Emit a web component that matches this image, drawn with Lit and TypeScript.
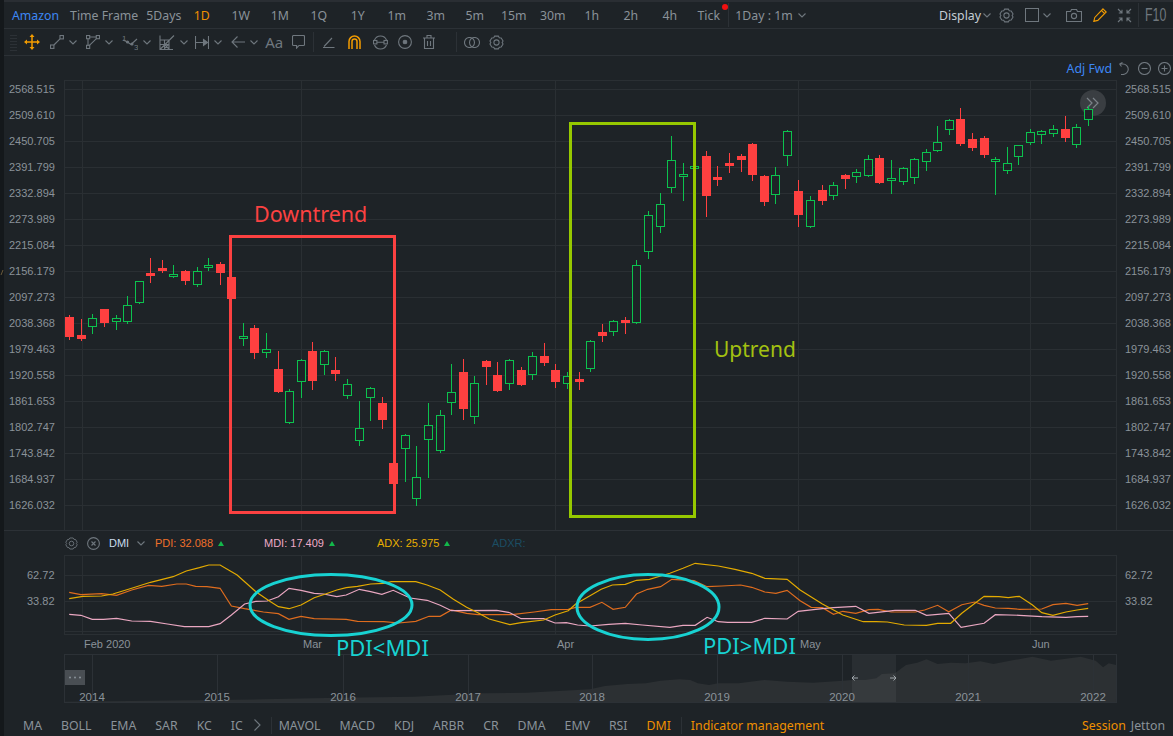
import { LitElement, html, css, svg } from "lit";
import { customElement } from "lit/decorators.js";

// every candle is [x, wickTop, wickBottom, bodyTop, bodyBottom], read from 3x crops
type Candle = [number, number, number, number, number, "r" | "g"];

const GROUP_A: Candle[] = [
  [208, 255, 330, 261, 321, "r"], [244, 267, 332, 315, 327, "r"], [277, 252, 312, 265, 292, "g"],
  [313, 237, 291, 237, 279, "r"], [349, 255, 300, 265, 277, "g"], [382, 198, 282, 226, 275, "g"],
  [418, 152, 221, 154, 218, "g"], [451, 84, 159, 129, 137, "r"], [487, 90, 129, 114, 123, "r"],
  [520, 105, 144, 133, 140, "g"], [556, 120, 165, 124, 153, "r"], [592, 111, 171, 124, 166, "g"],
  [625, 84, 123, 106, 113, "g"], [661, 96, 165, 102, 129, "r"], [694, 141, 207, 141, 207, "r"],
  [730, 279, 348, 319, 328, "g"], [763, 285, 387, 294, 369, "r"], [799, 309, 384, 358, 370, "g"],
  [835, 363, 489, 417, 486, "r"], [868, 477, 582, 484, 578, "g"], [904, 387, 504, 391, 455, "g"],
  [937, 336, 480, 363, 453, "r"], [973, 360, 435, 364, 404, "g"], [1006, 381, 453, 420, 432, "r"],
  [1042, 447, 507, 463, 497, "g"], [1078, 513, 648, 595, 632, "g"], [1111, 471, 573, 475, 503, "g"],
  [1147, 501, 597, 519, 570, "r"], [1180, 699, 762, 699, 762, "r"],
];

const GROUP_B: Candle[] = [
  [16, 942, 1085, 946, 986, "g"], [49, 978, 1158, 1072, 1136, "g"], [85, 849, 1074, 916, 959, "g"],
  [121, 870, 998, 886, 992, "g"], [154, 732, 885, 817, 848, "g"], [190, 717, 900, 756, 867, "r"],
  [223, 768, 912, 790, 890, "g"], [259, 720, 795, 723, 741, "r"], [292, 726, 816, 765, 813, "r"],
  [328, 717, 810, 721, 791, "g"], [364, 741, 798, 750, 795, "r"], [397, 696, 780, 709, 764, "g"],
  [433, 669, 738, 708, 729, "r"], [466, 732, 804, 750, 786, "r"], [502, 756, 807, 769, 791, "g"],
  [538, 756, 810, 777, 786, "r"], [571, 660, 756, 664, 746, "g"], [607, 612, 666, 636, 648, "r"],
  [640, 600, 648, 604, 635, "g"], [676, 591, 642, 600, 609, "r"], [709, 420, 612, 436, 608, "g"],
  [745, 273, 417, 286, 395, "g"], [781, 219, 339, 253, 320, "g"], [814, 48, 219, 121, 203, "g"],
  [850, 129, 243, 163, 170, "g"], [883, 139, 146, 139, 146, "g"],
];

const GROUP_C: Candle[] = [
  [49, 153, 351, 168, 288, "r"], [82, 198, 258, 231, 240, "r"], [118, 159, 219, 189, 198, "r"],
  [154, 162, 216, 168, 180, "r"], [187, 129, 243, 132, 225, "r"], [223, 225, 318, 228, 306, "r"],
  [256, 201, 312, 226, 284, "g"], [292, 90, 198, 94, 167, "g"], [325, 240, 381, 273, 345, "r"],
  [361, 288, 383, 301, 382, "g"], [397, 255, 316, 270, 303, "r"], [430, 246, 300, 256, 287, "g"],
  [466, 222, 267, 225, 237, "r"], [499, 207, 249, 217, 230, "g"], [535, 165, 232, 178, 227, "g"],
  [568, 165, 252, 174, 249, "r"], [604, 180, 282, 235, 242, "g"], [640, 201, 255, 205, 245, "g"],
  [673, 174, 252, 178, 233, "g"], [709, 147, 213, 157, 185, "g"], [742, 78, 156, 127, 152, "g"],
  [778, 57, 105, 61, 89, "g"], [811, 24, 138, 57, 132, "r"], [847, 99, 153, 117, 144, "r"],
  [883, 108, 174, 114, 165, "r"], [916, 171, 285, 178, 185, "g"], [952, 141, 222, 190, 212, "g"],
  [985, 135, 195, 136, 170, "g"], [1021, 87, 135, 97, 128, "g"], [1054, 90, 132, 94, 104, "g"],
  [1090, 75, 111, 88, 101, "g"], [1126, 48, 126, 87, 114, "r"], [1159, 72, 144, 82, 134, "g"],
  [1195, 18, 78, 28, 59, "g"],
];

const place = (list: Candle[], ox: number, oy: number): Candle[] =>
  list.map(([x, a, b, c, d, k]) => [
    Math.floor(ox + x / 3), oy + a / 3, oy + b / 3, oy + c / 3, oy + d / 3, k,
  ]);

const CANDLES = [
  ...place(GROUP_A, 0, 230),
  ...place(GROUP_B, 400, 120),
  ...place(GROUP_C, 690, 100),
];

const PRICES = [
  "2568.515", "2509.610", "2450.705", "2391.799", "2332.894", "2273.989", "2215.084", "2156.179",
  "2097.273", "2038.368", "1979.463", "1920.558", "1861.653", "1802.747", "1743.842", "1684.937", "1626.032",
];

// indicator lines, left half and right half come from two crops with different x scale
const L = 1568 / 590;
const R = 1568 / 583;
const line = (left: number[], right: number[]) => {
  const out: string[] = [];
  for (let i = 0; i < left.length; i += 2) out.push(`${(left[i] / L).toFixed(1)},${(530 + left[i + 1] / 3).toFixed(1)}`);
  for (let i = 0; i < right.length; i += 2) out.push(`${(590 + right[i] / R).toFixed(1)},${(530 + right[i + 1] / 3).toFixed(1)}`);
  return out.join(" ");
};

const ADX = line(
  [184, 206, 220, 199, 270, 198, 300, 192, 350, 175, 400, 157, 460, 140, 495, 123, 530, 113, 555, 105, 585, 105, 630, 135, 680, 185, 715, 212, 740, 230, 768, 236, 800, 225, 835, 203, 865, 192, 895, 180, 920, 173, 950, 169, 985, 162, 1020, 160, 1040, 155, 1105, 155, 1135, 165, 1170, 180, 1205, 208, 1240, 232, 1270, 248, 1300, 267, 1355, 284, 1385, 278, 1445, 270, 1475, 255, 1510, 242, 1530, 222],
  [0, 197, 30, 178, 60, 165, 95, 163, 125, 151, 160, 148, 190, 138, 215, 130, 250, 115, 283, 100, 345, 108, 390, 118, 435, 130, 470, 145, 530, 148, 565, 180, 625, 222, 680, 255, 735, 275, 770, 275, 800, 276, 845, 285, 905, 286, 935, 280, 970, 280, 1000, 250, 1060, 199, 1100, 200, 1125, 203, 1155, 199, 1190, 225, 1215, 248, 1245, 256, 1280, 246, 1310, 240, 1340, 235],
);
const PDI = line(
  [184, 187, 215, 194, 270, 191, 310, 196, 350, 180, 395, 166, 430, 169, 470, 162, 495, 162, 520, 169, 550, 170, 585, 175, 615, 228, 650, 236, 700, 246, 740, 251, 768, 268, 800, 259, 835, 266, 920, 268, 950, 274, 1020, 275, 1060, 279, 1105, 274, 1140, 259, 1170, 259, 1200, 240, 1240, 250, 1270, 254, 1360, 254, 1420, 246, 1465, 239, 1510, 238, 1530, 232],
  [0, 232, 32, 217, 62, 238, 95, 232, 125, 192, 155, 178, 190, 170, 220, 148, 280, 152, 315, 170, 355, 168, 405, 165, 435, 172, 470, 186, 500, 190, 530, 181, 565, 212, 595, 232, 625, 233, 655, 253, 680, 244, 715, 250, 750, 239, 775, 238, 810, 246, 875, 246, 900, 240, 935, 226, 965, 245, 1000, 224, 1035, 216, 1060, 226, 1090, 234, 1125, 235, 1155, 238, 1215, 237, 1245, 224, 1280, 220, 1310, 226, 1340, 221],
);
const MDI = line(
  [184, 253, 215, 256, 245, 268, 275, 268, 310, 265, 350, 273, 400, 274, 445, 282, 490, 290, 555, 290, 585, 281, 615, 255, 650, 222, 680, 214, 710, 213, 740, 200, 768, 175, 800, 181, 835, 190, 860, 192, 895, 200, 920, 195, 955, 178, 985, 185, 1015, 193, 1045, 181, 1090, 204, 1135, 211, 1170, 226, 1200, 242, 1320, 241, 1355, 248, 1385, 266, 1445, 266, 1475, 279, 1505, 278, 1535, 285],
  [0, 288, 50, 283, 95, 280, 140, 285, 215, 292, 250, 286, 283, 286, 315, 262, 345, 275, 370, 277, 435, 277, 470, 265, 530, 267, 560, 244, 625, 236, 655, 233, 715, 229, 750, 250, 820, 241, 875, 241, 905, 256, 965, 250, 998, 292, 1060, 280, 1090, 254, 1155, 256, 1215, 260, 1280, 262, 1310, 260, 1340, 259],
);
const AREA = line(
  [172, 515, 400, 512, 700, 508, 900, 503, 1100, 500, 1280, 490, 1400, 488],
  [0, 478, 40, 468, 100, 462, 150, 460, 190, 452, 240, 448, 270, 450, 290, 460, 320, 465, 345, 460, 400, 460, 470, 450, 530, 455, 600, 458, 680, 452, 705, 450, 740, 450, 770, 445, 785, 432, 820, 430, 850, 405, 880, 398, 905, 388, 935, 402, 970, 398, 1010, 400, 1050, 394, 1085, 402, 1130, 392, 1190, 380, 1240, 392, 1270, 388, 1320, 380, 1360, 392, 1380, 412, 1395, 400, 1415, 405],
);

const VERTICALS = [82, 301, 555, 798, 1030];
const NAV_LINES = [92.5, 217.5, 343.5, 468.5, 592.5, 717.5, 842.5, 968.5, 1093.5];
const NAV_YEARS: [string, number][] = [
  ["2014", 92], ["2015", 217], ["2016", 343], ["2017", 468], ["2018", 592],
  ["2019", 717], ["2020", 842], ["2021", 968], ["2022", 1093],
];
const MONTHS: [string, number][] = [["Feb 2020", 84], ["Mar", 303], ["Apr", 557], ["May", 800], ["Jun", 1032]];

const FRAMES = ["1D", "1W", "1M", "1Q", "1Y", "1m", "3m", "5m", "15m", "30m", "1h", "2h", "4h", "Tick"];
const LEFT_TABS = ["MA", "BOLL", "EMA", "SAR", "KC", "IC"];
const RIGHT_TABS = ["MAVOL", "MACD", "KDJ", "ARBR", "CR", "DMA", "EMV", "RSI"];

const gear = (s = 15) => html`<svg class="ico" width=${s} height=${s} viewBox="0 0 16 16">
  <path d="M6 1.200h4l1 1.700 2 .2 2 3.400-1 1.500 1 1.500-2 3.400-2 .2-1 1.700H6l-1-1.700-2-.2-2-3.400 1-1.500-1-1.500 2-3.400 2-.2z" />
  <circle cx="8" cy="8" r="2.800" />
</svg>`;
const chev = html`<svg class="ico chev" width="8" height="5" viewBox="0 0 8 5"><path d="M.5.5L4 4 7.5.5" /></svg>`;

@customElement("app-root")
export class AppRoot extends LitElement {
  static styles = css`
    :host {
      display: block;
      position: relative;
      width: 1173px;
      height: 736px;
      box-sizing: border-box;
      padding-left: 4px;
      overflow: hidden;
      background: linear-gradient(90deg, #14181b 4px, #1e2327 4px);
      font-family: "Noto Sans", "Liberation Sans", sans-serif;
      color: #8a9299;
      font-size: 12.3px;
    }
    svg { display: block; }
    .ico { fill: none; stroke: #6f777e; stroke-width: 1.1; flex: none; }
    .ico.orange { stroke: #f39c00; }
    .ico.orange-fill { stroke: #f39c00; stroke-width: 1.5; }
    .ico text { fill: #6f777e; stroke: none; font: 8px "Liberation Sans", sans-serif; }

    .bar {
      display: flex;
      align-items: center;
      box-sizing: border-box;
      border-bottom: 1px solid #2c3136;
    }
    .top {
      height: 29px;
      border-top: 2px solid #2a2e33;
      padding-left: 8px;
      padding-right: 8px;
    }
    .name { color: #3d87f5; margin-right: 11px; }
    .label { margin-right: 8px; }
    .five { width: 36px; flex: none; }
    .tf { width: 39px; text-align: center; position: relative; flex: none; }
    .tf.on { color: #f09000; }
    .tf.tick::after {
      content: "";
      position: absolute;
      top: -3px;
      right: 0;
      width: 6px;
      height: 6px;
      border-radius: 50%;
      background: #f01010;
    }
    .vsep { width: 1px; height: 24px; background: #2c3136; flex: none; }
    .span { margin: 0 5px 0 6px; }
    .push { margin-left: auto; }
    .display { color: #c5cdd4; margin-right: 2px; }
    .m8 { margin-left: 8px; }
    .m9 { margin-left: 9px; }
    .m11 { margin-left: 11px; }
    .m4 { margin-left: 4px; }
    .m15 { margin-left: 15px; }
    .m10 { margin-left: 10px; }
    .m6 { margin-left: 6px; }
    .f10 {
      width: 20px;
      flex: none;
      font: 19px "Liberation Sans", sans-serif;
      margin-left: 6px;
      color: #6f777e;
      transform: scaleX(0.65);
      transform-origin: left center;
    }
    .square { width: 14px; height: 14px; border: 1px solid #6f777e; box-sizing: border-box; flex: none; }

    .tools { height: 27px; padding-left: 6px; }
    .grip { margin-right: 7px; stroke: #2c3136; }
    .move { margin-right: 10px; }
    .drop { width: 36.2px; display: flex; align-items: center; gap: 5px; flex: none; }
    .tool { width: 25px; display: flex; align-items: center; flex: none; }
    .aa { width: 27px; margin-left: -2px; font-size: 15px; color: #6f777e; flex: none; line-height: 1; }
    .tools .vsep { height: 20px; margin: 0 9px 0 8px; }
    .tools .after { margin-right: 7px; }

    .adj {
      height: 24px;
      display: flex;
      align-items: center;
      justify-content: flex-end;
      padding-right: 2px;
      gap: 7px;
    }
    .fwd { color: #3d87f5; }

    .axis { font: 11px "Liberation Sans", sans-serif; fill: #8a9299; }
    .year { font: 11.5px "Liberation Sans", sans-serif; fill: #8a9299; }

    .head {
      height: 25px;
      box-sizing: border-box;
      border-top: 1px solid #2c3136;
      display: flex;
      align-items: center;
      padding-left: 61px;
      font: 11px "Liberation Sans", sans-serif;
    }
    .head .dmi { color: #c9dcec; margin-left: 9px; width: 28px; }
    .head .cell { display: flex; align-items: center; gap: 5px; flex: none; }
    .pdi { color: #f0702a; margin-left: 10px; width: 109px; }
    .mdi { color: #eeaac6; width: 113px; }
    .adx { color: #e8ae00; width: 115px; }
    .adxr { color: #1b4d63; }
    .up {
      width: 0;
      height: 0;
      border-left: 3px solid transparent;
      border-right: 3px solid transparent;
      border-bottom: 5px solid #12b84a;
    }

    .tabs {
      height: 33px;
      padding-top: 11px;
      padding-left: 19px;
      padding-right: 8px;
      box-sizing: border-box;
      display: flex;
      align-items: center;
      gap: 19px;
      white-space: nowrap;
    }
    .tabs .more { margin-left: -8px; }
    .tabs .vsep { height: 17px; margin: 0 -10px 0 -9px; }
    .tabs .vsep.first { margin-right: -12px; }
    .tabs .on { color: #f09000; }
    .tabs .jet { margin-left: -14px; }
    .tabs .push { margin-left: auto; }

    .overlay { position: absolute; left: 0; top: 0; pointer-events: none; }
    .note { font-family: "Noto Sans", sans-serif; }
  `;

  private renderCandles() {
    return CANDLES.map(([x, wt, wb, bt, bb, k]) => {
      const red = k === "r";
      const c = red ? "#ff4040" : "#0cc24e";
      const top = Math.round(bt);
      const h = Math.max(Math.round(bb) - top, 2);
      return svg`
        <line x1=${x + 0.5} x2=${x + 0.5} y1=${Math.round(wt)} y2=${Math.round(wb)} stroke=${c} />
        ${red
          ? svg`<rect x=${x - 4} y=${top} width="9" height=${h} fill=${c} />`
          : svg`<rect x=${x - 3.5} y=${top + 0.5} width="8" height=${h - 1} fill="#1e2327" stroke=${c} />`}
      `;
    });
  }

  private renderMain() {
    return html`<svg width="1169" height="450" viewBox="4 80 1169 450">
      <g stroke="#2a2f33" shape-rendering="crispEdges">
        <line x1="64" x2="1116" y1="80.5" y2="80.5" />
        <line x1="64.5" x2="64.5" y1="80" y2="530" />
        <line x1="1116.5" x2="1116.5" y1="80" y2="530" />
        ${PRICES.map((_, i) => svg`<line x1="64" x2="1116" y1=${89.5 + i * 26} y2=${89.5 + i * 26} />`)}
        ${VERTICALS.map((x) => svg`<line x1=${x + 0.5} x2=${x + 0.5} y1="80" y2="530" />`)}
      </g>
      ${PRICES.map((p, i) => svg`
        <text class="axis" x="9" y=${93 + i * 26}>${p}</text>
        <text class="axis" x="1125" y=${93 + i * 26}>${p}</text>
      `)}
      <circle cx="1093" cy="103" r="13" fill="#3a3e42" />
      <path d="M1087 98l5 5-5 5M1093 98l5 5-5 5" fill="none" stroke="#7c8389" stroke-width="1.2" />
      <g shape-rendering="crispEdges">${this.renderCandles()}</g>
    </svg>`;
  }

  private renderHead() {
    return html`<div class="head">
      ${gear(13)}
      <svg class="ico m9" width="13" height="13" viewBox="0 0 13 13">
        <circle cx="6.5" cy="6.5" r="5.9" /><path d="M4.5 4.5l4 4M8.5 4.5l-4 4" />
      </svg>
      <span class="dmi">DMI</span>
      ${chev}
      <span class="cell pdi">PDI: 32.088 <i class="up"></i></span>
      <span class="cell mdi">MDI: 17.409 <i class="up"></i></span>
      <span class="cell adx">ADX: 25.975 <i class="up"></i></span>
      <span class="adxr">ADXR:</span>
    </div>`;
  }

  private renderIndicator() {
    return html`<svg width="1169" height="99" viewBox="4 555 1169 99">
      <g stroke="#2a2f33" shape-rendering="crispEdges">
        <rect x="64.5" y="555.5" width="1052" height="79" fill="none" />
        <line x1="64" x2="1116" y1="575.5" y2="575.5" />
        <line x1="64" x2="1116" y1="601.5" y2="601.5" />
        <line x1="64" x2="1116" y1="631.5" y2="631.5" />
        ${VERTICALS.map((x) => svg`<line x1=${x + 0.5} x2=${x + 0.5} y1="555" y2="634" />`)}
      </g>
      <g fill="none" stroke-width="1.2">
        <polyline points=${PDI} stroke="#de6c1e" />
        <polyline points=${MDI} stroke="#eaa7c1" />
        <polyline points=${ADX} stroke="#e3aa00" />
      </g>
      <text class="axis" x="27" y="579">62.72</text>
      <text class="axis" x="27" y="605">33.82</text>
      <text class="axis" x="1125" y="579">62.72</text>
      <text class="axis" x="1125" y="605">33.82</text>
      ${MONTHS.map(([t, x]) => svg`<text class="axis" x=${x} y="648">${t}</text>`)}
    </svg>`;
  }

  private renderNavigator() {
    return html`<svg width="1169" height="49" viewBox="4 654 1169 49">
      <polygon points="64,702 ${AREA} 1116,702" fill="#2c3033" />
      <rect x="852" y="654" width="44" height="48" fill="#ffffff" opacity="0.05" />
      <g stroke="#2c3136" shape-rendering="crispEdges">
        <rect x="64.5" y="654.5" width="1052" height="48" fill="none" />
        ${NAV_LINES.map((x) => svg`<line x1=${x} x2=${x} y1="654" y2="702" />`)}
      </g>
      <rect x="65" y="670" width="20" height="15" fill="#494e53" />
      <g fill="#8a9299">
        <circle cx="70" cy="677.5" r="1" /><circle cx="75" cy="677.5" r="1" /><circle cx="80" cy="677.5" r="1" />
      </g>
      ${NAV_YEARS.map(([t, x]) => svg`<text class="year" x=${x} y="701" text-anchor="middle">${t}</text>`)}
      <path d="M858 678h-6l2.5-2.5M852 678l2.5 2.5M890 678h6l-2.5-2.5M896 678l-2.5 2.5" fill="none" stroke="#a0a6ab" />
    </svg>`;
  }

  private renderOverlay() {
    return html`<svg class="overlay" width="1173" height="736" viewBox="0 0 1173 736">
      <path d="M1 275l2-5" stroke="#6b5a3a" fill="none" />
      <rect x="230.5" y="236.5" width="164" height="276" fill="none" stroke="#fb4141" stroke-width="3" />
      <rect x="570.5" y="123.5" width="124" height="393" fill="none" stroke="#96c800" stroke-width="3" />
      <ellipse cx="331" cy="605" rx="81" ry="30.5" fill="none" stroke="#18d2d2" stroke-width="3" />
      <ellipse cx="648" cy="607" rx="71" ry="32.5" fill="none" stroke="#18d2d2" stroke-width="3" />
      <text class="note" x="254" y="222" font-size="21.5" fill="#fb4141">Downtrend</text>
      <text class="note" x="714" y="357" font-size="21" fill="#a3c011">Uptrend</text>
      <text class="note" x="336" y="656" font-size="22" fill="#18d2d2">PDI&lt;MDI</text>
      <text class="note" x="703" y="654" font-size="22" fill="#18d2d2">PDI&gt;MDI</text>
    </svg>`;
  }

  render() {
    return html`
      <div class="bar top">
        <span class="name">Amazon</span>
        <span class="label">Time Frame</span>
        <span class="five">5Days</span>
        ${FRAMES.map((f) => html`<span class="tf ${f === "1D" ? "on" : ""} ${f === "Tick" ? "tick" : ""}">${f}</span>`)}
        <i class="vsep"></i>
        <span class="span">1Day : 1m</span>
        ${chev}
        <span class="display push">Display</span>
        ${chev}
        <span class="m8">${gear(15)}</span>
        <i class="square m11"></i>
        <span class="m4">${chev}</span>
        <svg class="ico m15" width="16" height="13" viewBox="0 0 16 13">
          <path d="M.5 2.5h4l1-2h5l1 2h4v10H.5z" /><circle cx="8" cy="7" r="2.6" />
        </svg>
        <svg class="ico orange m11" width="14" height="14" viewBox="0 0 14 14">
          <path d="M10 .8l3.2 3.2-8.4 8.4-4 1 1-4zM8.4 2.4l3.2 3.2" />
        </svg>
        <svg class="ico m10" width="15" height="15" viewBox="0 0 15 15">
          <path d="M1 1l4 4M5 1.8V5H1.8M14 1l-4 4M10 1.8V5h3.2M1 14l4-4M5 13.2V10H1.8M14 14l-4-4M10 13.2V10h3.2" />
        </svg>
        <i class="vsep m6"></i>
        <span class="f10">F10</span>
      </div>

      <div class="bar tools">
        <svg class="ico grip" width="7" height="17" viewBox="0 0 7 17">
          <path d="M0 1.500h7M0 4.500h7M0 7.500h7M0 10.500h7M0 13.500h7M0 16.500h7" />
        </svg>
        <svg class="ico orange-fill move" width="16" height="16" viewBox="0 0 16 16">
          <path d="M8 2v12M2 8h12" />
          <path d="M8 0l2.500 3h-5zM8 16l2.500-3h-5zM0 8l3-2.500v5zM16 8l-3-2.500v5z" fill="#f39c00" stroke="none" />
        </svg>
        <span class="drop">
          <svg class="ico" width="14" height="14" viewBox="0 0 14 14">
            <rect x=".5" y="10" width="3.4" height="3.4" /><rect x="10" y=".5" width="3.4" height="3.4" /><path d="M3.9 10L10 3.9" />
          </svg>${chev}
        </span>
        <span class="drop">
          <svg class="ico" width="14" height="14" viewBox="0 0 14 14">
            <rect x=".5" y=".5" width="3.2" height="3.2" /><rect x="10.3" y=".5" width="3.2" height="3.2" /><rect x=".5" y="10.3" width="3.2" height="3.2" />
            <path d="M3.7 2h6.6M2 3.7v6.6M3.4 10.4l7-6.7" />
          </svg>${chev}
        </span>
        <span class="drop">
          <svg class="ico" width="16" height="16" viewBox="0 0 16 16">
            <text x="0" y="7">1</text><text x="12" y="15.5">3</text>
            <path d="M1 6l4.5 2 3.5 2.5L15 5" /><circle cx="5.5" cy="8" r="1" fill="#6f777e" /><circle cx="10" cy="10" r="1" fill="#6f777e" />
          </svg>${chev}
        </span>
        <span class="drop">
          <svg class="ico" width="16" height="15" viewBox="0 0 16 15">
            <path d="M1 .5v14h13M1 5h9M1 9.5h9M5.5 5v9M10 5v9M1 14.5l14-14M5.5 9.5l4 4M9.5 9.5l-4 4" />
          </svg>${chev}
        </span>
        <span class="drop">
          <svg class="ico" width="14" height="13" viewBox="0 0 14 13">
            <path d="M.5 0v13M13.5 0v13M.5 6.5h12" /><path d="M8.5 3.5l4 3-4 3z" fill="#6f777e" />
          </svg>${chev}
        </span>
        <span class="drop">
          <svg class="ico" width="14" height="12" viewBox="0 0 14 12"><path d="M14 6H1M6.5.5L1 6l5.5 5.5" /></svg>${chev}
        </span>
        <span class="aa">Aa</span>
        <svg class="ico" width="13" height="14" viewBox="0 0 13 14">
          <path d="M1.5.5h10a1 1 0 011 1v8a1 1 0 01-1 1H7l-2.4 2.6v-2.6H1.5a1 1 0 01-1-1v-8a1 1 0 011-1z" />
        </svg>
        <i class="vsep"></i>
        <span class="tool">
          <svg class="ico" width="12" height="11" viewBox="0 0 12 11"><path d="M0 10.5h11.5M1 9.5L9 1" /></svg>
        </span>
        <span class="tool">
          <svg class="ico orange-fill" width="13" height="14" viewBox="0 0 13 14">
            <path d="M1 14V6.5a5.5 5.5 0 0111 0V14M4 14V6.5a2.5 2.5 0 015 0V14" />
          </svg>
        </span>
        <span class="tool">
          <svg class="ico" width="15" height="15" viewBox="0 0 15 15">
            <rect x=".5" y="5.5" width="3.4" height="3.4" /><rect x="11" y="5.5" width="3.4" height="3.4" />
            <path d="M3.9 7.2h7.1M1.5 5A6.5 6.5 0 0113.5 5M1.5 10A6.5 6.5 0 0013.5 10" />
          </svg>
        </span>
        <span class="tool">
          <svg class="ico" width="14" height="14" viewBox="0 0 14 14">
            <circle cx="7" cy="7" r="6.4" /><circle cx="7" cy="7" r="1.8" fill="#6f777e" />
          </svg>
        </span>
        <span class="tool">
          <svg class="ico" width="12" height="14" viewBox="0 0 12 14">
            <path d="M0 3h12M4 3V.5h4V3M1.5 3v10.5h9V3M4.5 6v5M7.5 6v5" />
          </svg>
        </span>
        <i class="vsep after"></i>
        <span class="tool">
          <svg class="ico" width="16" height="11" viewBox="0 0 16 11">
            <circle cx="5.5" cy="5.5" r="5" /><circle cx="10.5" cy="5.5" r="5" />
          </svg>
        </span>
        ${gear(15)}
      </div>

      <div class="adj">
        <span class="fwd">Adj Fwd</span>
        <svg class="ico" width="12" height="13" viewBox="0 0 12 13"><path d="M.5 2h3.5a5 5 0 110 10.5H2M.5 2l3-1.500M.5 2L2.500 4.500" /></svg>
        <svg class="ico" width="13" height="13" viewBox="0 0 13 13"><circle cx="6.5" cy="6.5" r="6" /><path d="M3.500 6.500h6" /></svg>
        <svg class="ico" width="13" height="13" viewBox="0 0 13 13"><circle cx="6.5" cy="6.5" r="6" /><path d="M3.500 6.500h6M6.500 3.500v6" /></svg>
      </div>

      ${this.renderMain()}
      ${this.renderHead()}
      ${this.renderIndicator()}
      ${this.renderNavigator()}

      <div class="tabs">
        ${LEFT_TABS.map((t) => html`<span>${t}</span>`)}
        <svg class="ico more" width="7" height="12" viewBox="0 0 7 12"><path d="M.5.500L6 6 .5 11.500" /></svg>
        <i class="vsep first"></i>
        ${RIGHT_TABS.map((t) => html`<span>${t}</span>`)}
        <span class="on">DMI</span>
        <i class="vsep"></i>
        <span class="on">Indicator management</span>
        <span class="on push">Session</span>
        <span class="jet">Jetton</span>
      </div>

      ${this.renderOverlay()}
    `;
  }
}
